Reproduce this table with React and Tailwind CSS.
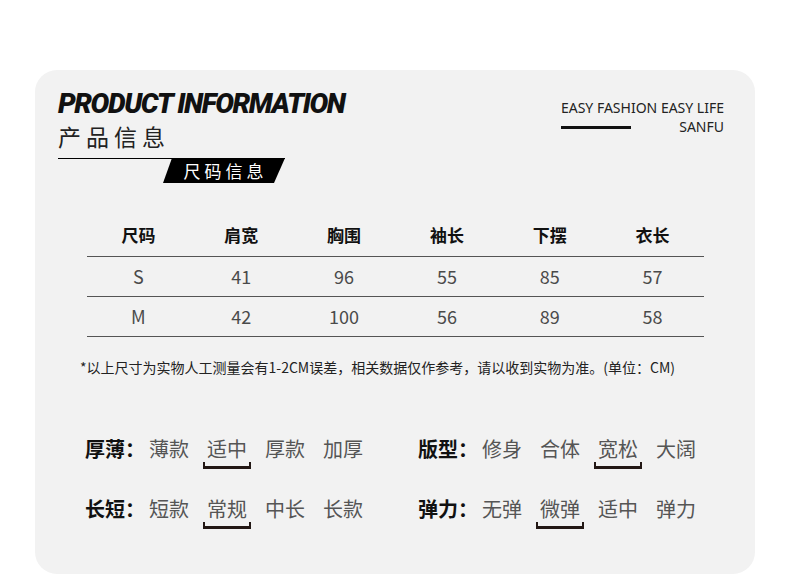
import React from "react";

const sizes = [
  ["S", "41", "96", "55", "85", "57"],
  ["M", "42", "100", "56", "89", "58"],
];

const headers = ["尺码", "肩宽", "胸围", "袖长", "下摆", "衣长"];

const attrs = [
  [
    { label: "厚薄：", options: ["薄款", "适中", "厚款", "加厚"], picked: 1 },
    { label: "版型：", options: ["修身", "合体", "宽松", "大阔"], picked: 2 },
  ],
  [
    { label: "长短：", options: ["短款", "常规", "中长", "长款"], picked: 1 },
    { label: "弹力：", options: ["无弹", "微弹", "适中", "弹力"], picked: 1 },
  ],
];

const AttrGroup = ({ group, className }) => (
  <div className={`flex items-start ${className}`}>
    <span className="w-[64px] text-[20px] leading-[24px] font-bold text-[#111]">{group.label}</span>
    <div className="flex gap-[18px]">
      {group.options.map((opt, i) => (
        <div key={opt} className="flex flex-col items-center w-[40px]">
          <span className="text-[20px] leading-[24px] text-[#555] whitespace-nowrap">{opt}</span>
          {/* bracket under the chosen value */}
          <div
            className={`mt-px w-[48px] h-[7px] border-x-2 border-b-[3px] ${
              i === group.picked ? "border-[#231815]" : "border-transparent"
            }`}
          ></div>
        </div>
      ))}
    </div>
  </div>
);

const App = () => {
  return (
    <div className="bg-white w-[790px] h-[575px] overflow-hidden pt-[70px] pl-[35px] font-['Noto_Sans_CJK_SC',sans-serif]">
      <div className="w-[720px] h-[504px] rounded-[22px] bg-[#f2f2f2] pt-[18px]">
        {/* --- Header --- */}
        <div className="flex justify-between pl-[23px] pr-[31px]">
          <div>
            <h1 className="font-['Roboto',sans-serif] italic font-black text-[28px] leading-[32px] tracking-[-1.4px] text-[#111]">
              PRODUCT INFORMATION
            </h1>
            <p className="mt-[5px] text-[23px] leading-[23px] tracking-[5px] text-[#222]">产品信息</p>
            <div className="mt-[10px] w-[227px] border-t border-black">
              <div className="ml-[105px] -mt-px w-[122px] h-[25px] bg-black [clip-path:polygon(9px_0,100%_0,calc(100%-11px)_100%,0_100%)] flex items-center justify-center pl-[3px]">
                <span className="text-white text-[17px] leading-[17px] tracking-[4px]">尺码信息</span>
              </div>
            </div>
          </div>
          <div className="mt-[12px] font-['Noto_Sans',sans-serif] text-[14px] leading-[16px] text-[#222]">
            <p>EASY FASHION EASY LIFE</p>
            <div className="mt-[3px] flex items-center justify-between">
              <div className="w-[70px] h-[3px] bg-[#111] mt-[1px]"></div>
              <span>SANFU</span>
            </div>
          </div>
        </div>

        {/* --- Size table --- */}
        <div className="mt-[34px] ml-[52px] w-[617px]">
          <div className="grid grid-cols-6 h-[40px] items-center border-b border-[#555] pb-[3px]">
            {headers.map((h) => (
              <span key={h} className="text-center text-[17px] font-semibold text-[#111]">
                {h}
              </span>
            ))}
          </div>
          {sizes.map((row) => (
            <div key={row[0]} className="grid grid-cols-6 h-[40px] items-center border-b border-[#555]">
              {row.map((v, i) => (
                <span key={i} className="text-center text-[18px] text-[#4a4a4a]">
                  {v}
                </span>
              ))}
            </div>
          ))}
        </div>

        <p className="mt-[20px] ml-[45px] text-[14px] leading-[20px] text-[#222] whitespace-nowrap">
          *以上尺寸为实物人工测量会有1-2CM误差，相关数据仅作参考，请以收到实物为准。(单位：CM)
        </p>

        {/* --- Attributes --- */}
        <div className="mt-[60px] ml-[50px] flex flex-col gap-[28px]">
          {attrs.map((pair, r) => (
            <div key={r} className="flex">
              <AttrGroup group={pair[0]} className="w-[333px]" />
              <AttrGroup group={pair[1]} />
            </div>
          ))}
        </div>
      </div>
    </div>
  );
};

export default App;
